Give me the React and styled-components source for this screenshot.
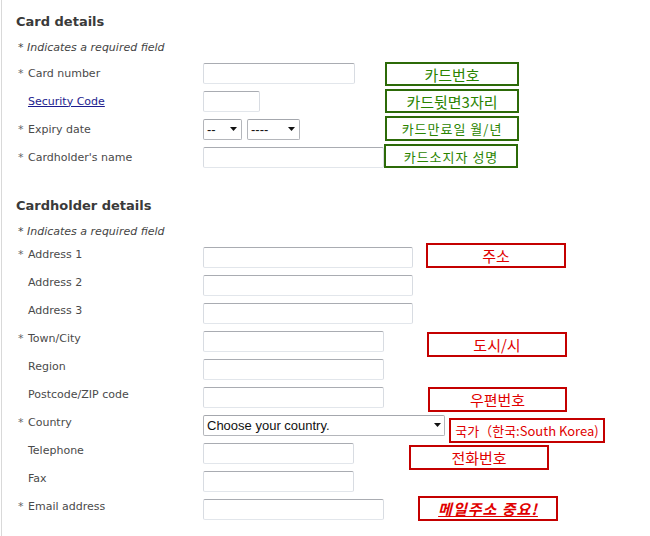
import React from "react";
import styled, { createGlobalStyle } from "styled-components";

const GlobalStyle = createGlobalStyle`
  html, body {
    margin: 0;
    padding: 0;
    background: #fff;
  }
  body {
    font-family: "DejaVu Sans", Verdana, sans-serif;
  }
  * {
    box-sizing: border-box;
  }
`;

const cardRows = [
  { label: "Card number", req: true, field: "text", w: 152, note: { text: "카드번호", gap: 30, w: 134, h: 24, dy: 1 } },
  { label: "Security Code", link: true, field: "text", w: 57, note: { text: "카드뒷면3자리", gap: 125, w: 134, h: 24 } },
  { label: "Expiry date", req: true, field: "expiry", note: { text: "카드만료일 월/년", gap: 85, w: 134, h: 25, dy: -1, size: 13, ls: 1 } },
  { label: "Cardholder's name", req: true, field: "text", w: 181, note: { text: "카드소지자 성명", gap: 0, w: 134, h: 24, dy: -1, size: 13, ls: 1 } },
];

const holderRows = [
  { label: "Address 1", req: true, field: "text", w: 210, note: { text: "주소", gap: 13, w: 140, h: 25, dy: -2 } },
  { label: "Address 2", field: "text", w: 210 },
  { label: "Address 3", field: "text", w: 210 },
  { label: "Town/City", req: true, field: "text", w: 181, note: { text: "도시/시", gap: 43, w: 140, h: 25, dy: 3 } },
  { label: "Region", field: "text", w: 181 },
  { label: "Postcode/ZIP code", field: "text", w: 181, note: { text: "우편번호", gap: 44, w: 139, h: 25, dy: 2 } },
  { label: "Country", req: true, field: "country", note: { text: "국가（한국:South Korea)", gap: 4, w: 156, h: 25, dy: 5, size: 13 } },
  { label: "Telephone", field: "text", w: 151, note: { text: "전화번호", gap: 55, w: 140, h: 25, dy: 4 } },
  { label: "Fax", field: "text", w: 151 },
  { label: "Email address", req: true, field: "text", w: 181, note: { text: "메일주소 중요!", gap: 34, w: 140, h: 25, dy: -1, strong: true, ls: 1 } },
];

function Arrow() {
  return (
    <svg width="7" height="4" viewBox="0 0 7 4">
      <path d="M0 0h7L3.5 4z" fill="#111" />
    </svg>
  );
}

function Field({ row }) {
  if (row.field === "expiry") {
    return (
      <Pair>
        <Select $w={39}><span>--</span><Arrow /></Select>
        <Select $w={53}><span>----</span><Arrow /></Select>
      </Pair>
    );
  }
  if (row.field === "country") {
    return (
      <Select $w={242} $pr={3}>
        <span>Choose your country.</span>
        <Arrow />
      </Select>
    );
  }
  return <TextBox type="text" $w={row.w} />;
}

function FormRow({ row, raise, tone }) {
  return (
    <Row>
      <Label $raise={raise}>
        <Star>{row.req ? "*" : ""}</Star>
        {row.link ? <HelpLink href="#">{row.label}</HelpLink> : row.label}
      </Label>
      <Field row={row} />
      {row.note && (
        <Note
          $tone={tone}
          $gap={row.note.gap}
          $w={row.note.w}
          $h={row.note.h}
          $dy={row.note.dy}
          $size={row.note.size}
          $ls={row.note.ls}
          $strong={row.note.strong}
        >
          {row.note.text}
        </Note>
      )}
    </Row>
  );
}

export default function App() {
  return (
    <Page>
      <GlobalStyle />
      <Title $first>Card details</Title>
      <Hint>* Indicates a required field</Hint>
      {cardRows.map(r => <FormRow key={r.label} row={r} tone="green" />)}

      <Title>Cardholder details</Title>
      <Hint>* Indicates a required field</Hint>
      {holderRows.map(r => <FormRow key={r.label} row={r} raise tone="red" />)}
    </Page>
  );
}

const Page = styled.div`
  margin-left: 1px;
  border-left: 1px solid #d9d9d9;
  min-height: 536px;
  padding: 14px 0 0 14px;
  background: #fff;
`;

const Title = styled.h2`
  margin: ${p => (p.$first ? "0" : "27px")} 0 0;
  font-size: 13px;
  line-height: 16px;
  font-weight: bold;
  color: #3a3a3a;
`;

const Hint = styled.p`
  margin: 11px 0 4px 2px;
  font-size: 11px;
  line-height: 14px;
  font-style: italic;
  color: #444;
`;

const Row = styled.div`
  display: flex;
  align-items: center;
  height: 28px;
`;

const Label = styled.label`
  flex: none;
  display: flex;
  width: 187px;
  padding-left: 2px;
  margin-bottom: ${p => (p.$raise ? "6px" : "0")};
  font-size: 11px;
  line-height: 13px;
  color: #4a4a4a;
`;

const Star = styled.span`
  width: 10px;
  color: #666;
`;

const HelpLink = styled.a`
  color: #1c1c8e;
  text-decoration: underline;
`;

const TextBox = styled.input`
  flex: none;
  width: ${p => p.$w}px;
  height: 21px;
  margin: 0;
  padding: 2px 4px;
  border: 1px solid;
  border-color: #a9acb2 #d8dce2 #e2e6eb #d8dce2;
  border-radius: 2px;
  background: #fff;
  font: 12px "Liberation Sans", Arial, sans-serif;
  outline: none;
`;

const Pair = styled.div`
  display: flex;
  gap: 5px;
`;

const Select = styled.div`
  flex: none;
  display: flex;
  align-items: center;
  justify-content: space-between;
  width: ${p => p.$w}px;
  height: 21px;
  padding: 0 ${p => p.$pr || 4}px 0 3px;
  border: 1px solid #b4b6bb;
  border-top-color: #a4a7ad;
  border-radius: 2px;
  background: #fff;
  font: 13px "Liberation Sans", Arial, sans-serif;
  color: #111;
`;

const Note = styled.div`
  flex: none;
  display: flex;
  align-items: center;
  justify-content: center;
  width: ${p => p.$w}px;
  height: ${p => p.$h}px;
  margin-left: ${p => p.$gap}px;
  transform: translateY(${p => p.$dy || 0}px);
  border: 2px solid ${p => (p.$tone === "green" ? "#2c6a08" : "#c40000")};
  background: #fff;
  color: ${p => (p.$tone === "green" ? "#2a8400" : "#e00000")};
  font-family: "Noto Sans CJK KR", sans-serif;
  font-size: ${p => p.$size || 15}px;
  line-height: 1;
  letter-spacing: ${p => p.$ls || 0}px;
  font-weight: ${p => (p.$strong ? "bold" : "normal")};
  font-style: ${p => (p.$strong ? "italic" : "normal")};
  text-decoration: ${p => (p.$strong ? "underline" : "none")};
  white-space: nowrap;
`;
